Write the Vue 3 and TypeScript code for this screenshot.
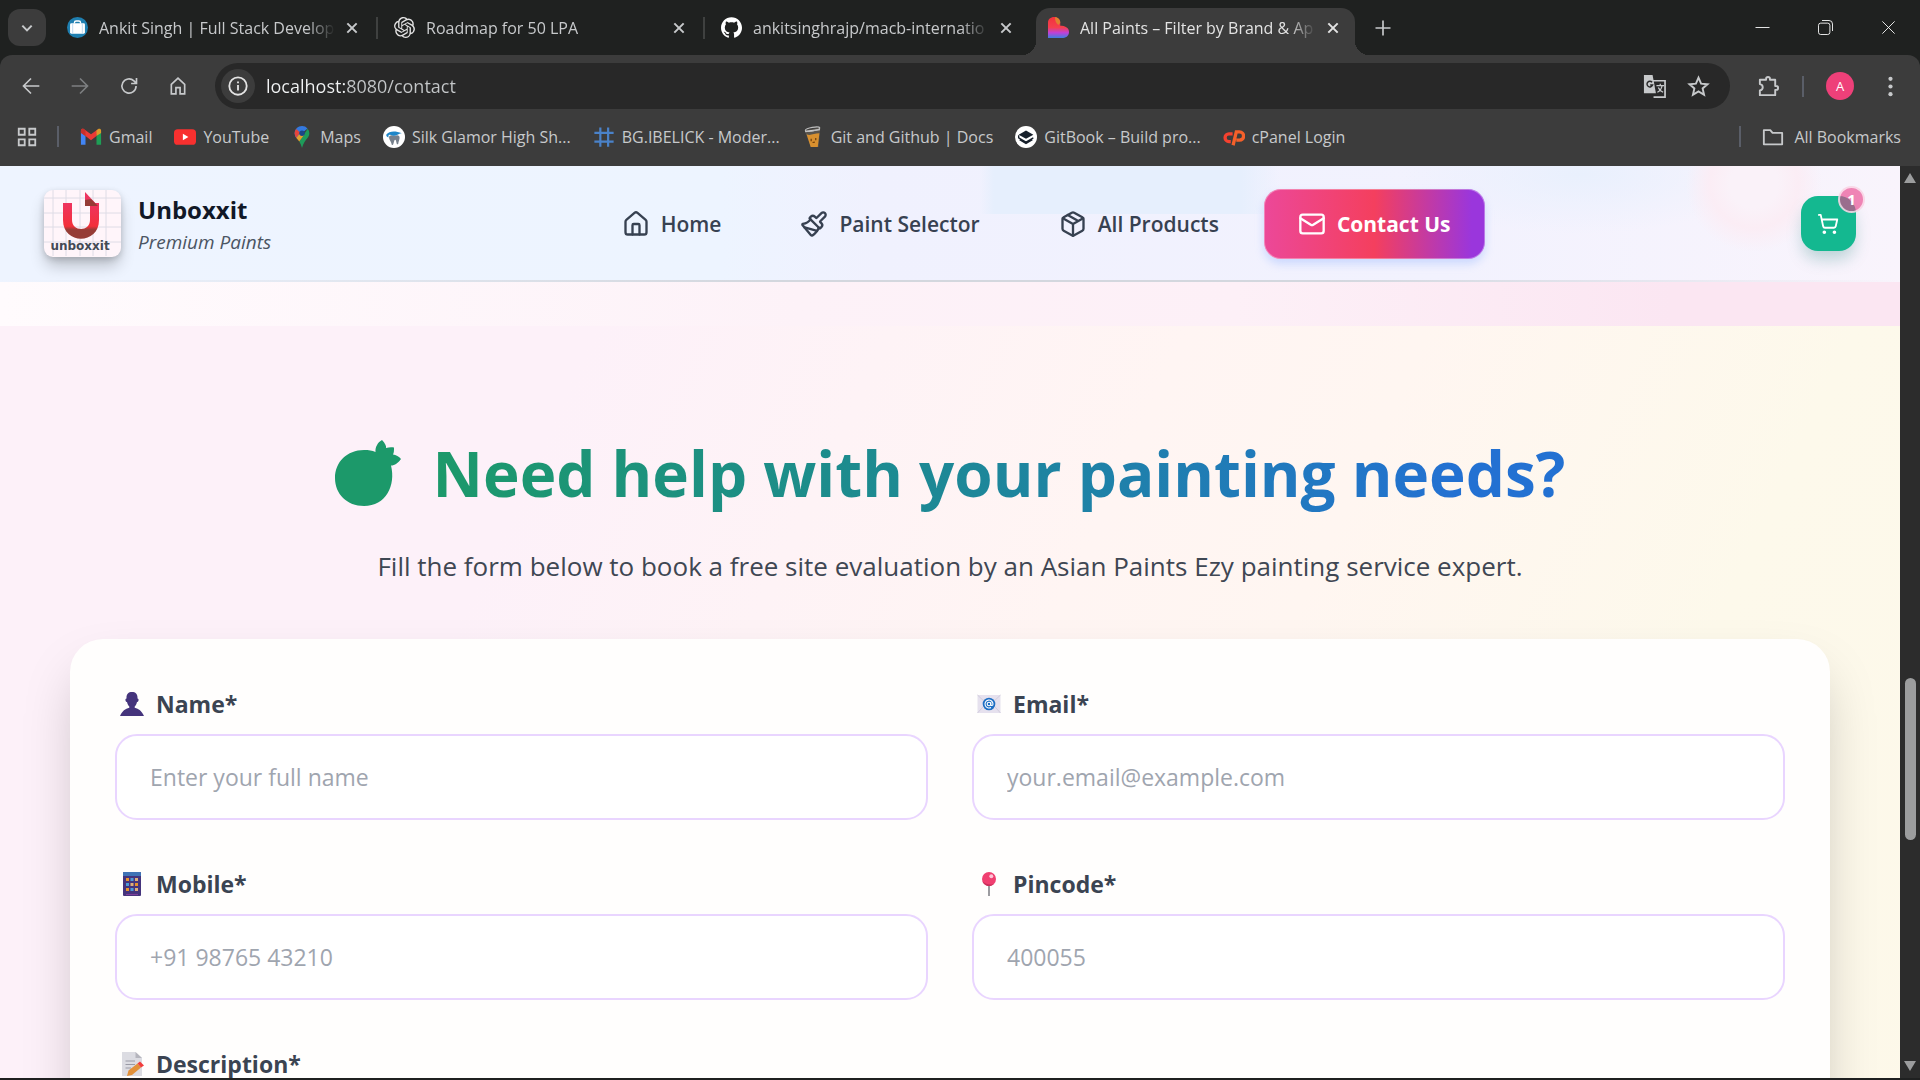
<script setup lang="ts">
import { ref } from 'vue'

interface Tab { title: string; icon: string; active?: boolean; divider?: boolean }
interface Bookmark { title: string; icon: string }
interface NavItem { title: string; icon: string; active?: boolean }
interface Field { id: string; label: string; icon: string; type: string; placeholder: string }

const icons: Record<string, string> = {
  bag: '<circle cx="12" cy="12" r="12" fill="#1f7fb0"/><path d="M8.500 7.500V6.500a2 2 0 0 1 2-2h3a2 2 0 0 1 2 2v1" fill="none" stroke="#fff" stroke-width="1.600"/><rect x="3.500" y="7" width="17" height="12" rx="1.500" fill="#fff"/><path d="M6.500 7v12M17.500 7v12" stroke="#b7d6ee" stroke-width="1"/>',
  openai: '<path fill="#e3e3e3" d="M22.2819 9.8211a5.9847 5.9847 0 0 0-.5157-4.9108 6.0462 6.0462 0 0 0-6.5098-2.9A6.0651 6.0651 0 0 0 4.9807 4.1818a5.9847 5.9847 0 0 0-3.9977 2.9 6.0462 6.0462 0 0 0 .7427 7.0966 5.98 5.98 0 0 0 .511 4.9107 6.051 6.051 0 0 0 6.5146 2.9001A5.9847 5.9847 0 0 0 13.2599 24a6.0557 6.0557 0 0 0 5.7718-4.2058 5.9894 5.9894 0 0 0 3.9977-2.9001 6.0557 6.0557 0 0 0-.7475-7.0729zm-9.022 12.6081a4.4755 4.4755 0 0 1-2.8764-1.0408l.1419-.0804 4.7783-2.7582a.7948.7948 0 0 0 .3927-.6813v-6.7369l2.02 1.1686a.071.071 0 0 1 .038.052v5.5826a4.504 4.504 0 0 1-4.4945 4.4944zm-9.6607-4.1254a4.4708 4.4708 0 0 1-.5346-3.0137l.142.0852 4.783 2.7582a.7712.7712 0 0 0 .7806 0l5.8428-3.3685v2.3324a.0804.0804 0 0 1-.0332.0615L9.74 19.9502a4.4992 4.4992 0 0 1-6.1408-1.6464zM2.3408 7.8956a4.485 4.485 0 0 1 2.3655-1.9728V11.6a.7664.7664 0 0 0 .3879.6765l5.8144 3.3543-2.0201 1.1685a.0757.0757 0 0 1-.071 0l-4.8303-2.7865A4.504 4.504 0 0 1 2.3408 7.872zm16.5963 3.8558L13.1038 8.364 15.1192 7.2a.0757.0757 0 0 1 .071 0l4.8303 2.7913a4.4944 4.4944 0 0 1-.6765 8.1042v-5.6772a.79.79 0 0 0-.407-.667zm2.0107-3.0231l-.142-.0852-4.7735-2.7818a.7759.7759 0 0 0-.7854 0L9.409 9.2297V6.8974a.0662.0662 0 0 1 .0284-.0615l4.8303-2.7866a4.4992 4.4992 0 0 1 6.6802 4.66zM8.3065 12.863l-2.02-1.1638a.0804.0804 0 0 1-.038-.0567V6.0742a4.4992 4.4992 0 0 1 7.3757-3.4537l-.142.0805L8.704 5.459a.7948.7948 0 0 0-.3927.6813zm1.0976-2.3654l2.602-1.4998 2.6069 1.4998v2.9994l-2.5974 1.4997-2.6067-1.4997Z"/>',
  github: '<path fill="#fff" d="M12 .297c-6.63 0-12 5.373-12 12 0 5.303 3.438 9.8 8.205 11.385.6.113.82-.258.82-.577 0-.285-.01-1.04-.015-2.04-3.338.724-4.042-1.61-4.042-1.61C4.422 18.07 3.633 17.7 3.633 17.7c-1.087-.744.084-.729.084-.729 1.205.084 1.838 1.236 1.838 1.236 1.07 1.835 2.809 1.305 3.495.998.108-.776.417-1.305.76-1.605-2.665-.3-5.466-1.332-5.466-5.93 0-1.31.465-2.38 1.235-3.22-.135-.303-.54-1.523.105-3.176 0 0 1.005-.322 3.3 1.23.96-.267 1.98-.399 3-.405 1.02.006 2.04.138 3 .405 2.28-1.552 3.285-1.23 3.285-1.23.645 1.653.24 2.873.12 3.176.765.84 1.23 1.91 1.23 3.22 0 4.61-2.805 5.625-5.475 5.92.42.36.81 1.096.81 2.22 0 1.606-.015 2.896-.015 3.286 0 .315.21.69.825.57C20.565 22.092 24 17.592 24 12.297c0-6.627-5.373-12-12-12"/>',
  heart: '<defs><linearGradient id="hg" x1="0" y1="0" x2="0" y2="1"><stop offset="0" stop-color="#f2323b"/><stop offset=".5" stop-color="#f5404f"/><stop offset=".75" stop-color="#c040d8"/><stop offset="1" stop-color="#3c7fe0"/></linearGradient></defs><path d="M0 24V6.500C0 2.500 3 0 7 0s7 3 7 6.500V10c5 0 10 2 10 7s-4 7-8 7Z" fill="url(#hg)"/><path d="M8 .2c4 0 6 3 6 6.500l-2 2.500C9 7 8 4 8 .2Z" fill="#e08030"/>',
  close: '<path d="M5 5l14 14M19 5L5 19"/>',
  plus: '<path d="M12 3v18M3 12h18"/>',
  chevron: '<path d="M5 8.500l7 7 7-7"/>',
  back: '<path d="M22 12H3M12 3l-9 9 9 9"/>',
  forward: '<path d="M2 12h19M12 3l9 9-9 9"/>',
  reload: '<path d="M20.500 12a8.500 8.500 0 1 1-2.600-6.100L21 9M21 2.500V9h-6.500"/>',
  chromeHome: '<path d="M4 10l8-7.500L20 10v11.500h-5.500V14h-5v7.500H4z"/>',
  info: '<circle cx="12" cy="12" r="9.500"/><path d="M12 11v6M12 7v2"/>',
  star: '<path d="M12 2.800l2.700 6.200 6.700.6-5.100 4.400 1.500 6.600-5.800-3.500-5.800 3.500 1.500-6.600-5.100-4.400 6.700-.6z"/>',
  puzzle: '<path d="M3 5h6.500V4a2 2 0 0 1 4 0v1H19v6.500h1a2 2 0 0 1 0 4h-1V21H3v-5c4-.5 4-6 0-6.500z" stroke-linejoin="round"/>',
  dots: '<circle cx="12" cy="4" r="2.200"/><circle cx="12" cy="12" r="2.200"/><circle cx="12" cy="20" r="2.200"/>',
  apps: '<path d="M3 3h6.500v6.500H3zM14.500 3H21v6.500h-6.500zM3 14.500h6.500V21H3zM14.500 14.500H21V21h-6.500z"/>',
  folder: '<path d="M2 4.500h7l2.500 3H22v12.500H2z" stroke-linejoin="round"/>',
  minimize: '<path d="M4 12h16"/>',
  restore: '<rect x="4" y="7" width="13" height="13" rx="2.500"/><path d="M8 4h8a4 4 0 0 1 4 4v8"/>',
  gmail: '<path d="M1 6v14.500h5V11z" fill="#4285f4"/><path d="M23 6v14.500h-5V11z" fill="#1e9e55"/><path d="M1 5c0-2 2-2.500 3.500-1.500L12 9l7.500-5.500L18 11l-6 4.500L6 11v0L1 7z" fill="#ea3a35"/><path d="M18 5l1.500-1.500C21 2.500 23 3 23 5v2.500L18 11z" fill="#d99a2b"/><path d="M1 5v2.500L6 11V5L4.500 3.500C3 2.500 1 3 1 5z" fill="#c5302b"/>',
  youtube: '<rect y="3.500" width="24" height="17" rx="4" fill="#f8302f"/><path d="M9.700 8.500v7l6-3.500z" fill="#fff"/>',
  maps: '<path d="M12 0C7.500 0 4 3.500 4 8c0 2 .7 3.500 1.800 5L18 2.600A8 8 0 0 0 12 0z" fill="#3479df"/><path d="M4 8c0-1.800.6-3.400 1.600-4.700L10 7l-4.200 6A8.500 8.500 0 0 1 4 8z" fill="#e5453b"/><path d="M18.200 3A8 8 0 0 1 20 8c0 2-.8 3.700-2 5.200-2.500 3.200-4.500 5.500-6 10.800-.9-3-1.800-5-3-7z" fill="#1e9b5a"/><path d="M5.800 13L10 8l4 2-5 7c-1-1.500-2-2.500-3.200-4z" fill="#e3a02b"/><circle cx="12" cy="8" r="3" fill="#1c4687"/>',
  tooth: '<circle cx="12" cy="12" r="12" fill="#fff"/><path d="M7 11c2-2 4-.5 5.500-.5s3.500-1.500 5 .5-.2 5-.8 8c-.3 1.300-1.500 1.300-1.800 0l-.8-3.200c-.3-1-1.400-1-1.700 0L11.200 20c-.4 1.300-1.600 1-1.800-.2C8.900 16.500 5.500 14 7 11z" fill="#76808c"/><path d="M3.500 9.500C7 5.500 13 5 20.500 8c-3 .2-4 2-7.500 2.500-3 .4-4-1.500-6-1-1.500.4-1 2-1 3-1.500-.5-2.500-1.500-2.500-3z" fill="#1e86c8"/>',
  hash: '<path d="M8 1.500v21M16.500 1.500v21M1.500 7.500h21M1.500 17h21" stroke="#4a82c9" stroke-width="2.400" fill="none"/>',
  cup: '<path d="M3 5l17-3-2 21H9.500z" fill="#59544d"/><path d="M3.500 6l16-2" stroke="#cfcfcf" stroke-width="1.500"/><ellipse cx="11.500" cy="3.500" rx="8" ry="2" transform="rotate(-10 11.500 3.500)" fill="none" stroke="#bdbdbd" stroke-width="1.200"/><path d="M5 9c4 2 8-1 14-1l-1.800 15H9.500z" fill="#d8902f"/><path d="M10 14v2.500M15 13v2.500M11.500 18l2.500-.5" stroke="#6b3c0c" stroke-width="1.300"/>',
  gitbook: '<circle cx="12" cy="12" r="12" fill="#fff"/><path d="M12 5l8 4.500-8 4.500-8-4.500z" fill="#17202b"/><path d="M4 10v3l8 4.500 8-4.500M5 15l7 4 7-4" fill="none" stroke="#17202b" stroke-width="1.500"/>',
  cpanel: '<path d="M10.500 8.500H6.500a4 4 0 1 0 0 8.500h2" fill="none" stroke="#f5412f" stroke-width="3.600"/><path d="M11 21L14.500 6.500H18a4.200 4.200 0 0 1 0 9h-3.500" fill="none" stroke="#f5602a" stroke-width="3.600"/>',
  house: '<path d="M15 21v-8a1 1 0 0 0-1-1h-4a1 1 0 0 0-1 1v8"/><path d="M3 10a2 2 0 0 1 .709-1.528l7-5.999a2 2 0 0 1 2.582 0l7 5.999A2 2 0 0 1 21 10v9a2 2 0 0 1-2 2H5a2 2 0 0 1-2-2z"/>',
  brush: '<path d="m14.622 17.897-10.680-2.913"/><path d="M18.376 2.622a1 1 0 1 1 3.002 3.002L17.360 9.643a.5.5 0 0 0 0 .707l.944.944a2.410 2.410 0 0 1 0 3.408l-.944.944a.5.5 0 0 1-.707 0L8.354 7.348a.5.5 0 0 1 0-.707l.944-.944a2.410 2.410 0 0 1 3.408 0l.944.944a.5.5 0 0 0 .707 0z"/><path d="M9 8c-1.804 2.710-3.970 3.460-6.583 3.948a.507.507 0 0 0-.302.819l7.320 8.883a1 1 0 0 0 1.185.204C12.735 20.405 16 16.792 16 15"/>',
  box: '<path d="M11 21.730a2 2 0 0 0 2 0l7-4A2 2 0 0 0 21 16V8a2 2 0 0 0-1-1.730l-7-4a2 2 0 0 0-2 0l-7 4A2 2 0 0 0 3 8v8a2 2 0 0 0 1 1.730z"/><path d="M12 22V12M3.290 7L12 12l8.710-5M7.500 4.270l9 5.150"/>',
  mail: '<rect width="20" height="16" x="2" y="4" rx="2"/><path d="m22 7-8.970 5.700a1.940 1.940 0 0 1-2.060 0L2 7"/>',
  cart: '<circle cx="8" cy="21" r="1"/><circle cx="19" cy="21" r="1"/><path d="M2.050 2.050h2l2.660 12.420a2 2 0 0 0 2 1.580h9.780a2 2 0 0 0 1.950-1.570l1.650-7.430H5.120"/>',
  person: '<path d="M6.500 5.500C6.500 2 8.500 0 12 0s5.500 2 5.500 5.500v1c1 0 1.300 1 1 2s-.8 1.600-1.500 1.500c-.5 2-1.300 3.500-2.300 4.500v1.200c4 .9 7 3.200 9.300 8.300H0c2.300-5.100 5.300-7.400 9.300-8.300v-1.200C8.300 13.500 7.500 12 7 10c-.7.100-1.200-.5-1.500-1.500s0-2 1-2z" fill="#45347c"/>',
  email: '<rect x=".5" y="3" width="23" height="18" fill="#e6e1ee"/><path d="M.5 3L12 14 23.500 3M.5 21L9 11.500M23.500 21L15 11.500" fill="none" stroke="#d2ccdc" stroke-width="1"/><circle cx="12" cy="12" r="6.300" fill="#1e6fc4"/><circle cx="12" cy="12" r="1.800" fill="none" stroke="#fff" stroke-width="1.100"/><path d="M13.800 10.200v2.300c0 1.500 2.200 1.400 2.200-.5a4 4 0 1 0-2 3.500" fill="none" stroke="#fff" stroke-width="1.100"/>',
  phone: '<rect x="3" y="0" width="18" height="24" rx="1" fill="#45347c"/><path d="M3 1a1 1 0 0 1 1-1h16a1 1 0 0 1 1 1v3H3z" fill="#3f73b5"/><path d="M6 6h3v3H6zM15 11h3v3h-3zM6 16h3v3H6z" fill="#e8912d"/><path d="M10.500 6h3v3h-3zM6 11h3v3H6zM10.500 16h3v3h-3z" fill="#4d9bd8"/><path d="M15 6h3v3h-3zM10.500 11h3v3h-3zM15 16h3v3h-3z" fill="#e0ae7a"/><path d="M6 22.500h12" stroke="#7d3f9a" stroke-width="1.200"/>',
  pin: '<path d="M12 12v12" stroke="#8b8b90" stroke-width="1.700"/><circle cx="12" cy="7" r="7" fill="#f03f70"/><path d="M5.500 9.500A7 7 0 0 0 17 12c-4 1-8.500 0-11.500-2.500z" fill="#c92f5b"/><circle cx="14.300" cy="4.200" r="2" fill="#ffc4d6"/>',
  memo: '<path d="M2 0h13.500L22 6v18H2z" fill="#dcdce2"/><path d="M15.500 0L22 6h-6.500z" fill="#b5b5bd"/><path d="M5.500 9H15M5.500 12.500H15M5.500 16H11" stroke="#9a9aa5" stroke-width="1.200"/><path d="M7 24l1.500-5.500 9-7 3.500 4-9 7.500z" fill="#e2913a"/><path d="M17.500 11.500l2.500-2 4 4-3 2z" fill="#f23c3c"/>'
}

const tabs: Tab[] = [
  { title: 'Ankit Singh | Full Stack Develop', icon: 'bag', divider: true },
  { title: 'Roadmap for 50 LPA', icon: 'openai', divider: true },
  { title: 'ankitsinghrajp/macb-internatio', icon: 'github' },
  { title: 'All Paints – Filter by Brand & Ap', icon: 'heart', active: true }
]

const bookmarks: Bookmark[] = [
  { title: 'Gmail', icon: 'gmail' },
  { title: 'YouTube', icon: 'youtube' },
  { title: 'Maps', icon: 'maps' },
  { title: 'Silk Glamor High Sh...', icon: 'tooth' },
  { title: 'BG.IBELICK - Moder...', icon: 'hash' },
  { title: 'Git and Github | Docs', icon: 'cup' },
  { title: 'GitBook – Build pro...', icon: 'gitbook' },
  { title: 'cPanel Login', icon: 'cpanel' }
]

const navItems: NavItem[] = [
  { title: 'Home', icon: 'house' },
  { title: 'Paint Selector', icon: 'brush' },
  { title: 'All Products', icon: 'box' },
  { title: 'Contact Us', icon: 'mail', active: true }
]

const fields: Field[] = [
  { id: 'name', label: 'Name*', icon: 'person', type: 'text', placeholder: 'Enter your full name' },
  { id: 'email', label: 'Email*', icon: 'email', type: 'email', placeholder: 'your.email@example.com' },
  { id: 'mobile', label: 'Mobile*', icon: 'phone', type: 'tel', placeholder: '+91 98765 43210' },
  { id: 'pincode', label: 'Pincode*', icon: 'pin', type: 'text', placeholder: '400055' }
]

const address = ref('localhost:8080/contact')
const cartCount = ref(1)
</script>

<template>
  <div class="window">
    <header class="chrome">
      <div class="tab-strip">
        <button class="tab-search" aria-label="Search tabs"><svg class="line thick" viewBox="0 0 24 24" v-html="icons.chevron"></svg></button>
        <div class="tabs">
          <div v-for="tab in tabs" :key="tab.title" class="tab" :class="{ active: tab.active, divider: tab.divider }">
            <svg class="favicon" viewBox="0 0 24 24" v-html="icons[tab.icon]"></svg>
            <span class="tab-title">{{ tab.title }}</span>
            <button class="tab-close" aria-label="Close tab"><svg class="line thick" viewBox="0 0 24 24" v-html="icons.close"></svg></button>
          </div>
        </div>
        <button class="new-tab" aria-label="New tab"><svg class="line" viewBox="0 0 24 24" v-html="icons.plus"></svg></button>
        <div class="window-controls">
          <button aria-label="Minimize"><svg class="line thin" viewBox="0 0 24 24" v-html="icons.minimize"></svg></button>
          <button aria-label="Restore"><svg class="line thin" viewBox="0 0 24 24" v-html="icons.restore"></svg></button>
          <button aria-label="Close"><svg class="line thin" viewBox="0 0 24 24" v-html="icons.close"></svg></button>
        </div>
      </div>

      <div class="toolbar">
        <div class="history">
          <button aria-label="Back"><svg class="line" viewBox="0 0 24 24" v-html="icons.back"></svg></button>
          <button class="dim" aria-label="Forward"><svg class="line" viewBox="0 0 24 24" v-html="icons.forward"></svg></button>
          <button aria-label="Reload"><svg class="line" viewBox="0 0 24 24" v-html="icons.reload"></svg></button>
          <button aria-label="Home"><svg class="line" viewBox="0 0 24 24" v-html="icons.chromeHome"></svg></button>
        </div>
        <div class="omnibox">
          <button class="site-info" aria-label="Site information"><svg class="line" viewBox="0 0 24 24" v-html="icons.info"></svg></button>
          <input v-model="address" class="address" aria-label="Address" spellcheck="false" />
          <button class="omni-action" aria-label="Translate">
            <svg viewBox="0 0 24 24">
              <path d="M9 6h14v17H11" fill="none" stroke="currentColor" stroke-width="1.800" />
              <path d="M14 11h8M18 9v2M20 11c-1 4-3 6-5 7M16 13c1 3 3 4 5 5" fill="none" stroke="currentColor" stroke-width="1.300" />
              <path d="M1 0h9l3.500 19H1z" fill="currentColor" />
              <path d="M9.500 7.500a3 3 0 1 0 .5 3H7.500" fill="none" stroke="#282828" stroke-width="1.500" />
            </svg>
          </button>
          <button class="omni-action" aria-label="Bookmark this tab"><svg class="line" viewBox="0 0 24 24" v-html="icons.star"></svg></button>
        </div>
        <div class="toolbar-end">
          <button aria-label="Extensions"><svg class="line" viewBox="0 0 24 24" v-html="icons.puzzle"></svg></button>
          <span class="rule"></span>
          <button class="avatar" aria-label="Profile">A</button>
          <button class="menu" aria-label="Menu"><svg fill="currentColor" viewBox="0 0 24 24" v-html="icons.dots"></svg></button>
        </div>
      </div>

      <nav class="bookmarks" aria-label="Bookmarks">
        <button class="apps" aria-label="Apps"><svg class="line" viewBox="0 0 24 24" v-html="icons.apps"></svg></button>
        <span class="rule"></span>
        <ul>
          <li v-for="mark in bookmarks" :key="mark.title">
            <a href="#"><svg class="favicon" viewBox="0 0 24 24" v-html="icons[mark.icon]"></svg>{{ mark.title }}</a>
          </li>
        </ul>
        <span class="rule"></span>
        <a class="all-bookmarks" href="#"><svg class="line" viewBox="0 0 24 24" v-html="icons.folder"></svg>All Bookmarks</a>
      </nav>
    </header>

    <div class="viewport">
      <div class="page">
        <header class="site-header">
          <a class="brand" href="#">
            <span class="logo">
              <svg viewBox="0 0 77 66">
                <path d="M9 0v66M22 0v66M36 0v66M49 0v66M62 0v66M0 8h77M0 23h77M0 37h77M0 52h77" stroke="#dedce6" stroke-width="1" />
                <defs>
                  <linearGradient id="logo-u" x1="0" y1="0" x2="0" y2="1">
                    <stop offset="0" stop-color="#ee3460" />
                    <stop offset=".65" stop-color="#f3303a" />
                    <stop offset=".75" stop-color="#963c36" />
                    <stop offset="1" stop-color="#963c36" />
                  </linearGradient>
                </defs>
                <path d="M19 13h9v17c0 12 18 12 18 0V13h9v17c0 25-36 25-36 0z" fill="url(#logo-u)" />
                <path d="M41 2l13 14H41z" fill="#ee3460" />
                <path d="M41 10l6-1 7 7H41z" fill="#963c36" />
              </svg>
              <span class="logo-word">unboxxit</span>
            </span>
            <span class="brand-text">
              <strong>Unboxxit</strong>
              <em>Premium Paints</em>
            </span>
          </a>
          <nav class="site-nav" aria-label="Main">
            <a v-for="item in navItems" :key="item.title" href="#" :class="{ current: item.active }">
              <svg class="line" viewBox="0 0 24 24" v-html="icons[item.icon]"></svg>{{ item.title }}
            </a>
          </nav>
          <button class="cart" aria-label="Cart">
            <svg class="line" viewBox="0 0 24 24" v-html="icons.cart"></svg>
            <span class="badge">{{ cartCount }}</span>
          </button>
        </header>
        <div class="banner-edge"></div>

        <main class="contact">
          <h1>
            <svg class="tomato" viewBox="0 0 66 66">
              <path d="M29 10c5 0 8 .5 11.500 2C40 7 43 2 47 0c3 3 4.500 6 4 8 3-1 6-1 8-.5 0 3 0 5-1 7 3 .5 6 2 8 4.500-3 4-6 6.500-10 6.500 5 20-5 40.500-27 40.500C12 66 0 54 0 38S12 10 29 10z" fill="currentColor" />
            </svg>
            <span>Need help with your painting needs?</span>
          </h1>
          <p class="lead">Fill the form below to book a free site evaluation by an Asian Paints Ezy painting service expert.</p>

          <form class="card" @submit.prevent>
            <div v-for="field in fields" :key="field.id" class="field">
              <label :for="field.id"><svg viewBox="0 0 24 24" v-html="icons[field.icon]"></svg>{{ field.label }}</label>
              <input :id="field.id" :type="field.type" :placeholder="field.placeholder" />
            </div>
            <div class="field wide">
              <label for="description"><svg viewBox="0 0 24 24" v-html="icons.memo"></svg>Description*</label>
              <textarea id="description" rows="4"></textarea>
            </div>
          </form>
        </main>
      </div>

      <div class="scrollbar" aria-hidden="true">
        <span class="arrow up"></span>
        <span class="gap-above"></span>
        <span class="thumb"></span>
        <span class="gap-below"></span>
        <span class="arrow down"></span>
      </div>
    </div>
  </div>
</template>

<style>
body {
  margin: 0;
  background: #1f2020;
}
</style>

<style scoped>
* {
  box-sizing: border-box;
}
.window {
  display: flex;
  flex-direction: column;
  height: 100vh;
  padding-bottom: 2px;
  overflow: hidden;
  font-family: "Open Sans", "Noto Sans", sans-serif;
  background: #1f2020;
}
button {
  display: flex;
  align-items: center;
  justify-content: center;
  flex: none;
  padding: 0;
  border: 0;
  background: none;
  color: inherit;
  font: inherit;
}
a {
  color: inherit;
  text-decoration: none;
}
svg {
  display: block;
  flex: none;
}
.line {
  fill: none;
  stroke: currentColor;
  stroke-width: 2;
}
.thick {
  stroke-width: 3;
}
.thin {
  stroke-width: 1;
}

/* Browser frame */
.chrome {
  flex: none;
  color: #c7c9cb;
  background: #1f2120;
  font-size: 16px;
}
.tab-strip {
  display: flex;
  align-items: center;
  height: 55px;
  padding-left: 8px;
}
.tab-search {
  width: 38px;
  height: 37px;
  margin-right: 5px;
  border-radius: 12px;
  background: #3c3c3c;
}
.tab-search svg {
  width: 16px;
}
.tabs {
  display: flex;
  align-self: stretch;
  flex: 0 1 1308px;
  min-width: 0;
}
.tab {
  position: relative;
  display: flex;
  align-items: center;
  flex: 1 1 0;
  min-width: 0;
  gap: 11px;
  padding: 0 16px;
}
.tab.divider::after {
  content: "";
  position: absolute;
  right: 0;
  width: 2px;
  height: 22px;
  background: #3f4140;
}
.tab.active {
  margin: 8px 4px 0;
  padding: 0 12px 8px;
  border-radius: 14px 14px 0 0;
  color: #e3e3e3;
  background: #3c3c3c;
}
.tab.active::before,
.tab.active::after {
  content: "";
  position: absolute;
  bottom: 0;
  width: 14px;
  height: 14px;
}
.tab.active::before {
  right: 100%;
  background: radial-gradient(circle at 0 0, transparent 14px, #3c3c3c 14px);
}
.tab.active::after {
  left: 100%;
  background: radial-gradient(circle at 100% 0, transparent 14px, #3c3c3c 14px);
}
.tab .favicon {
  width: 21px;
}
.tab-title {
  flex: 1;
  overflow: hidden;
  white-space: nowrap;
  mask-image: linear-gradient(90deg, #000 calc(100% - 28px), transparent);
}
.tab-close {
  width: 20px;
  margin-left: -4px;
}
.tab-close svg {
  width: 16px;
}
.new-tab {
  width: 48px;
}
.new-tab svg {
  width: 20px;
}
.window-controls {
  display: flex;
  margin-left: auto;
  color: #fff;
}
.window-controls button {
  width: 63px;
}
.window-controls svg {
  width: 21px;
}
.toolbar {
  display: flex;
  align-items: center;
  height: 62px;
  gap: 13px;
  padding: 0 16px 0 6px;
  border-radius: 12px 12px 0 0;
  background: #3c3c3c;
}
.history {
  display: flex;
}
.history button {
  width: 49px;
}
.history svg {
  width: 20px;
}
.history .dim {
  color: #7d7f81;
}
.omnibox {
  display: flex;
  align-items: center;
  flex: 1;
  height: 46px;
  padding: 0 10px 0 6px;
  border-radius: 23px;
  background: #282828;
}
.site-info {
  width: 34px;
  height: 34px;
  border-radius: 50%;
  color: #e3e3e3;
  background: #3c3c3c;
}
.site-info svg {
  width: 22px;
}
.address {
  flex: 1;
  min-width: 0;
  padding: 0 0 0 11px;
  border: 0;
  color: transparent;
  background: linear-gradient(90deg, #f1f3f4 90px, #c4c7c9 90px) text;
  font: inherit;
  font-size: 18px;
}
.omni-action {
  width: 44px;
}
.omni-action svg {
  width: 23px;
}
.toolbar-end {
  display: flex;
  align-items: center;
  gap: 22px;
  padding-left: 14px;
}
.toolbar-end svg {
  width: 23px;
}
.toolbar-end .menu {
  width: 28px;
}
.rule {
  flex: none;
  width: 2px;
  height: 21px;
  background: #5a5e68;
}
.avatar {
  width: 28px;
  height: 28px;
  border-radius: 50%;
  color: #fff;
  background: #ee4079;
  font-size: 13px;
}
.bookmarks {
  display: flex;
  align-items: center;
  height: 49px;
  padding: 0 19px 10px 16px;
  background: #3c3c3c;
}
.bookmarks .apps {
  margin-right: 19px;
}
.bookmarks svg {
  width: 22px;
  height: 22px;
}
.bookmarks ul {
  display: flex;
  flex: 1;
  gap: 22px;
  margin: 0;
  padding: 0 0 0 21px;
  list-style: none;
}
.bookmarks a {
  display: flex;
  align-items: center;
  gap: 7px;
  white-space: nowrap;
}
.bookmarks .all-bookmarks {
  gap: 10px;
  padding-left: 21px;
}

/* Page area */
.viewport {
  display: flex;
  flex: 1;
  min-height: 0;
  background: #2c2c2c;
}
.page {
  flex: 1;
  min-width: 0;
  overflow: hidden;
}
.scrollbar {
  display: flex;
  flex-direction: column;
  align-items: center;
  flex: none;
  width: 20px;
  padding: 7px 0;
}
.thumb {
  flex: 162 0 0;
  width: 11px;
  border-radius: 6px;
  background: #9c9d9e;
}
.gap-above {
  flex: 494 0 0;
}
.gap-below {
  flex: 221 0 0;
}
.arrow {
  border: 6px solid transparent;
}
.arrow.up {
  border-top: 0;
  border-bottom: 10px solid #9c9d9e;
}
.arrow.down {
  border-bottom: 0;
  border-top: 10px solid #9c9d9e;
}

.site-header {
  position: relative;
  display: flex;
  align-items: center;
  justify-content: space-between;
  height: 116px;
  padding: 0 44px 1px;
  color: #374151;
  background:
    radial-gradient(circle 68px at 1754px 18px, #faf2f9 0 24px, #fbedf5 44px, #fbedf500 68px),
    radial-gradient(ellipse 180px 60px at 1580px 8px, #e9f0fd, #e9f0fd00),
    linear-gradient(90deg, #e6effd00, #e6effd 14px calc(100% - 40px), #e6effd00) 980px 0 / 300px 48px no-repeat,
    linear-gradient(90deg, #eef4ff, #edf4ff 38%, #f0f1fe 46%, #f2f2fe 76%, #f9f4fc);
}
.site-header::after {
  content: "";
  position: absolute;
  left: 0;
  right: 0;
  bottom: 0;
  height: 2px;
  background: linear-gradient(90deg, #e5eaf300, #d3d7de 40%, #d3d7de 70%, #e5e7eb00);
}
.brand {
  display: flex;
  align-items: center;
  gap: 17px;
}
.logo {
  position: relative;
  overflow: hidden;
  width: 77px;
  height: 67px;
  border-radius: 9px;
  background: #fff5fa;
  box-shadow: 0 10px 16px -2px #0000003d, 0 2px 6px #00000026;
}
.logo-word {
  position: absolute;
  left: 0;
  right: 5px;
  bottom: 3px;
  color: #434a55;
  font: bold 12px/16px "DejaVu Sans", sans-serif;
  text-align: center;
}
.brand-text {
  display: flex;
  flex-direction: column;
  padding-top: 2px;
}
.brand-text strong {
  color: #111827;
  font-size: 24px;
  font-weight: 700;
  line-height: 34px;
}
.brand-text em {
  color: #4b5563;
  font-size: 19px;
  line-height: 30px;
}
.site-nav {
  display: flex;
  gap: 11px;
  font-size: 21px;
  font-weight: 600;
  line-height: 30px;
}
.site-nav a {
  display: flex;
  align-items: center;
  gap: 11px;
  padding: 20px 34px;
  border-radius: 17px;
}
.site-nav svg {
  width: 28px;
  stroke-linecap: round;
  stroke-linejoin: round;
}
.site-nav .current {
  color: #fff;
  background: linear-gradient(90deg, #ec4899, #f43f5e 50%, #9a36dc 94%);
  box-shadow: 0 5px 9px #93b4ff66, inset 0 0 0 1px #ffffff55;
  font-weight: 700;
}
.cart {
  position: relative;
  width: 55px;
  height: 55px;
  border-radius: 17px;
  color: #fff;
  background: #14b890;
  box-shadow: 0 10px 16px -2px #0f766e44;
}
.cart svg {
  width: 22px;
  stroke-linecap: round;
  stroke-linejoin: round;
}
.badge {
  position: absolute;
  top: -10px;
  right: -9px;
  width: 27px;
  height: 27px;
  border: 2px solid #ffffffb0;
  border-radius: 50%;
  background: #e9428aa0;
  font-size: 15px;
  font-weight: 700;
  line-height: 23px;
}
.banner-edge {
  height: 44px;
  background: linear-gradient(90deg, #fffbfd, #fdf2f8 42%, #fdf0f7 65%, #fbe6f2 88%);
}

.contact {
  display: flex;
  flex-direction: column;
  padding: 107px 70px 60px;
  background: linear-gradient(115deg, #fdf1f9 25%, #fff5f3 50%, #fff6f1 60%, #fdf9eb 78%, #fdf8e9);
}
h1 {
  display: flex;
  align-items: center;
  align-self: center;
  gap: 32px;
  margin: 0 0 33px;
  font-size: 62px;
  font-weight: 700;
  line-height: 80px;
  color: #1c996a;
}
h1 span {
  color: transparent;
  background: linear-gradient(90deg, #1c996a, #1d8799 48%, #2371d2 90%) text;
}
.tomato {
  width: 66px;
}
.lead {
  margin: 0 0 53px;
  color: #3f4753;
  font-size: 26px;
  line-height: 40px;
  text-align: center;
}
.card {
  display: grid;
  grid-template-columns: 1fr 1fr;
  gap: 44px;
  padding: 45px;
  border-radius: 33px;
  background: #fffefd;
  box-shadow: 0 28px 56px -12px #00000040;
}
.field {
  display: flex;
  flex-direction: column;
  gap: 10px;
}
.field.wide {
  grid-column: 1 / -1;
}
label {
  display: flex;
  align-items: center;
  gap: 12px;
  padding-left: 5px;
  color: #3b4452;
  font-size: 23px;
  font-weight: 700;
  line-height: 40px;
}
label svg {
  width: 24px;
}
.field input,
.field textarea {
  width: 100%;
  height: 86px;
  padding: 0 33px;
  border: 2px solid #e9d5ff;
  border-radius: 22px;
  background: #fff;
  color: #374151;
  font: inherit;
  font-size: 23px;
}
.field textarea {
  height: 160px;
}
.field input::placeholder {
  color: #9fa5af;
  opacity: 1;
}
</style>
